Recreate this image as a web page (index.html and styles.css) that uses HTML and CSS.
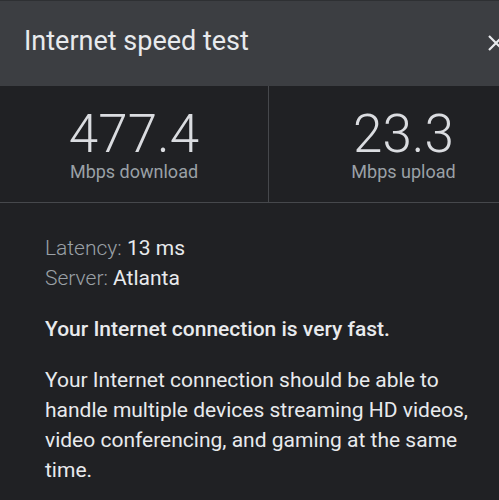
FILE: index.html
```html
<!DOCTYPE html>
<html lang="en">
<head>
  <meta charset="UTF-8">
  <meta name="viewport" content="width=device-width, initial-scale=1.0">
  <title>Internet speed test</title>
  <link rel="stylesheet" href="styles.css">
</head>
<body>
  <div class="card">
    <div class="card-header">
      <h1>Internet speed test</h1>
      <button class="close" aria-label="Close">
        <svg width="18" height="18" viewBox="0 0 18 18">
          <path d="M2 2 L16 16 M16 2 L2 16" stroke="#e8eaed" stroke-width="2.2" fill="none"/>
        </svg>
      </button>
    </div>
    <div class="stats">
      <div class="stat">
        <div class="stat-value">477.4</div>
        <div class="stat-label">Mbps download</div>
      </div>
      <div class="stat">
        <div class="stat-value">23.3</div>
        <div class="stat-label">Mbps upload</div>
      </div>
    </div>
    <div class="details">
      <div class="info">
        <div><span class="key">Latency:</span> 13 ms</div>
        <div><span class="key">Server:</span> Atlanta</div>
      </div>
      <p class="verdict">Your Internet connection is very fast.</p>
      <p class="desc">Your Internet connection should be able to handle multiple devices streaming HD videos, video conferencing, and gaming at the same time.</p>
    </div>
  </div>
</body>
</html>
```

FILE: styles.css
```css
body {
  margin: 0;
  padding: 0;
  background-color: #202124;
  font-family: Roboto, "Noto Sans", sans-serif;
  color: #e8eaed;
  overflow: hidden;
}
.card {
  width: 538px;
}
.card-header {
  height: 85px;
  border-top: 1px solid #2e3033;
  background-color: #3c3e42;
  display: flex;
  align-items: center;
  justify-content: space-between;
  padding: 0 33px 0 24px;
}
.card-header h1 {
  margin: 0 0 6px;
  font-size: 27px;
  font-weight: 400;
  color: #e8eaed;
}
.close {
  background: none;
  border: none;
  padding: 0;
  margin-top: -2px;
  display: flex;
}
.stats {
  display: grid;
  grid-template-columns: 1fr 1fr;
  border-bottom: 1px solid #46484c;
}
.stat {
  text-align: center;
  padding: 22px 0 19px;
}
.stat:first-child {
  border-right: 1px solid #46484c;
}
.stat-value {
  font-size: 53px;
  font-weight: 300;
  line-height: 53px;
  color: #dadce0;
}
.stat-label {
  font-size: 18px;
  line-height: 22px;
  color: #9aa0a6;
}
.details {
  padding: 30px 0 0 45px;
  width: 440px;
  font-size: 21px;
  line-height: 30px;
}
.key {
  color: #9aa0a6;
  font-weight: 300;
}
.verdict {
  margin: 21px 0 0;
  font-weight: 500;
}
.desc {
  margin: 21px 0 0;
}
```
